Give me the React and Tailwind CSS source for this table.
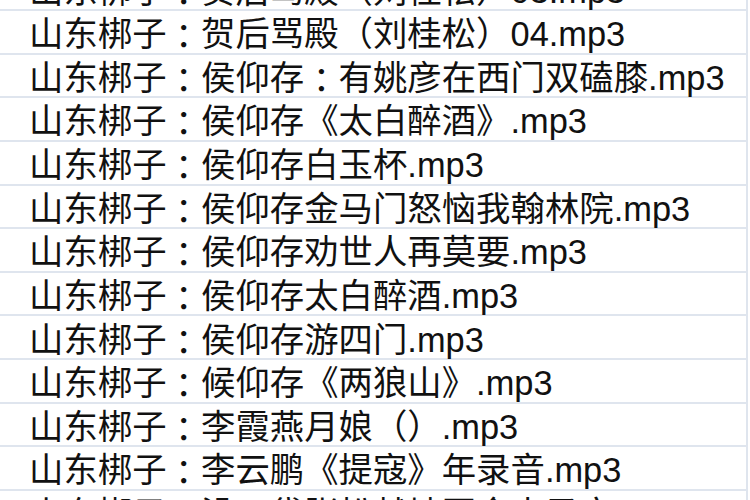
import React from 'react';

const files = [
  '山东梆子：贺后骂殿（刘桂松）03.mp3',
  '山东梆子：贺后骂殿（刘桂松）04.mp3',
  '山东梆子：侯仰存：有姚彦在西门双磕膝.mp3',
  '山东梆子：侯仰存《太白醉酒》.mp3',
  '山东梆子：侯仰存白玉杯.mp3',
  '山东梆子：侯仰存金马门怒恼我翰林院.mp3',
  '山东梆子：侯仰存劝世人再莫要.mp3',
  '山东梆子：侯仰存太白醉酒.mp3',
  '山东梆子：侯仰存游四门.mp3',
  '山东梆子：候仰存《两狼山》.mp3',
  '山东梆子：李霞燕月娘（）.mp3',
  '山东梆子：李云鹏《提寇》年录音.mp3',
  '山东梆子：没口袋张松献地图全本录音.mp3',
];

// the full-width colon sits centred in the reference, as in the TC glyph set
const renderName = (name) =>
  name.split(/(：)/).map((part, i) =>
    part === '：' ? (
      <span key={i} style={{ fontFamily: '"Noto Sans CJK TC", sans-serif' }}>
        ：
      </span>
    ) : (
      <span key={i}>{part}</span>
    )
  );

const App = () => {
  return (
    <div className="h-[500px] w-[750px] overflow-hidden bg-white">
      <div className="w-[748px] border-r-2 border-[#dfe5ee]">
        <div className="-mt-[32.6px]">
          {files.map((name, i) => (
            <div
              key={i}
              className="flex h-[43.64px] items-center border-b-2 border-[#dfe5ee] pl-[29px] pt-[5px] text-[34.4px] leading-none text-[#111] whitespace-nowrap"
              style={{ fontFamily: '"Liberation Sans", "Noto Sans CJK SC", sans-serif' }}
            >
              {renderName(name)}
            </div>
          ))}
        </div>
      </div>
    </div>
  );
};

export default App;
